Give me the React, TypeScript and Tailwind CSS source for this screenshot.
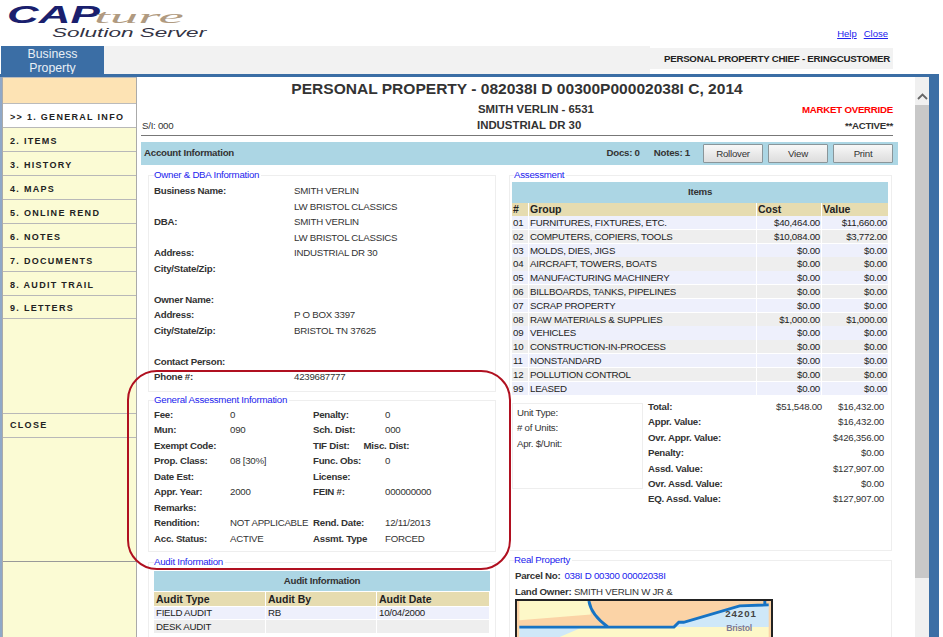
const navItems = [
  ">> 1. GENERAL INFO",
  "2. ITEMS",
  "3. HISTORY",
  "4. MAPS",
  "5. ONLINE REND",
  "6. NOTES",
  "7. DOCUMENTS",
  "8. AUDIT TRAIL",
  "9. LETTERS",
];

const ownerRows: [string, string][] = [
  ["Business Name:", "SMITH VERLIN"],
  ["", "LW BRISTOL CLASSICS"],
  ["DBA:", "SMITH VERLIN"],
  ["", "LW BRISTOL CLASSICS"],
  ["Address:", "INDUSTRIAL DR 30"],
  ["City/State/Zip:", ""],
  ["", ""],
  ["Owner Name:", ""],
  ["Address:", "P O BOX 3397"],
  ["City/State/Zip:", "BRISTOL TN 37625"],
  ["", ""],
  ["Contact Person:", ""],
  ["Phone #:", "4239687777"],
];

const generalRows: [string, string, string, string][] = [
  ["Fee:", "0", "Penalty:", "0"],
  ["Mun:", "090", "Sch. Dist:", "000"],
  ["Exempt Code:", "", "TIF Dist:", ""],
  ["Prop. Class:", "08 [30%]", "Func. Obs:", "0"],
  ["Date Est:", "", "License:", ""],
  ["Appr. Year:", "2000", "FEIN #:", "000000000"],
  ["Remarks:", "", "", ""],
  ["Rendition:", "NOT APPLICABLE", "Rend. Date:", "12/11/2013"],
  ["Acc. Status:", "ACTIVE", "Assmt. Type", "FORCED"],
];

const items: [string, string, string, string][] = [
  ["01", "FURNITURES, FIXTURES, ETC.", "$40,464.00", "$11,660.00"],
  ["02", "COMPUTERS, COPIERS, TOOLS", "$10,084.00", "$3,772.00"],
  ["03", "MOLDS, DIES, JIGS", "$0.00", "$0.00"],
  ["04", "AIRCRAFT, TOWERS, BOATS", "$0.00", "$0.00"],
  ["05", "MANUFACTURING MACHINERY", "$0.00", "$0.00"],
  ["06", "BILLBOARDS, TANKS, PIPELINES", "$0.00", "$0.00"],
  ["07", "SCRAP PROPERTY", "$0.00", "$0.00"],
  ["08", "RAW MATERIALS & SUPPLIES", "$1,000.00", "$1,000.00"],
  ["09", "VEHICLES", "$0.00", "$0.00"],
  ["10", "CONSTRUCTION-IN-PROCESS", "$0.00", "$0.00"],
  ["11", "NONSTANDARD", "$0.00", "$0.00"],
  ["12", "POLLUTION CONTROL", "$0.00", "$0.00"],
  ["99", "LEASED", "$0.00", "$0.00"],
];

const totals: [string, string, string][] = [
  ["Total:", "$51,548.00", "$16,432.00"],
  ["Appr. Value:", "", "$16,432.00"],
  ["Ovr. Appr. Value:", "", "$426,356.00"],
  ["Penalty:", "", "$0.00"],
  ["Assd. Value:", "", "$127,907.00"],
  ["Ovr. Assd. Value:", "", "$0.00"],
  ["EQ. Assd. Value:", "", "$127,907.00"],
];

function Panel({
  title,
  className,
  legendClass = "",
  children,
}: {
  title: string;
  className: string;
  legendClass?: string;
  children: React.ReactNode;
}) {
  return (
    <fieldset className={`border border-[#eeeeee] ${className}`}>
      <legend className={`pr-[2px] text-[9.7px] leading-[12px] text-[#2222ee] ${legendClass}`}>{title}</legend>
      {children}
    </fieldset>
  );
}

function Logo() {
  return (
    <div className="relative h-[46px] w-[215px] overflow-hidden">
      <span className="absolute top-[1px] left-[7px] origin-left [transform:scaleX(1.83)] text-[24px] leading-[28px] font-bold italic text-[#1a1f6e]">
        CAP
      </span>
      <span className="absolute top-[9px] left-[94px] origin-left [transform:scaleX(3)] font-['Liberation_Serif',serif] text-[19px] leading-[16px] italic text-[#b09a80]">
        ture
      </span>
      <span className="absolute top-[26px] left-[52px] origin-left [transform:scaleX(1.67)] text-[13.5px] leading-[14px] italic text-[#333344]">
        Solution Server
      </span>
    </div>
  );
}

function MapPicture() {
  return (
    <svg width="258" height="60" viewBox="0 0 258 60" className="block border-t-2 border-r-2 border-l-2 border-[#222222] bg-[#fbd3a6]">
      <path d="M0 0H72L74 14 0 20Z" fill="#fdf8c8" />
      <path d="M0 27H258V60H0Z" fill="#fdf8c8" />
      <path d="M0 27H66L40 38 0 42Z" fill="#cfe8f8" />
      <path d="M160 27L165 22H170L228 5 258 4V27Z" fill="#cfe8f8" />
      <path d="M72 0C74 12 82 20 92 27M0 27H160L165 22H170L228 5 258 4M254 0V4" fill="none" stroke="#1673c4" strokeWidth="3" />
      <text x="213" y="17" fontSize="10" fontWeight="700" letterSpacing="1" fill="#444444">24201</text>
      <text x="214" y="31" fontSize="9" fontWeight="700" fill="#7a7a99">Bristol</text>
    </svg>
  );
}

export default function App() {
  return (
    <div className="flex h-[637px] w-[943px] flex-col overflow-hidden bg-white font-['Liberation_Sans',Arial,sans-serif] text-[9.7px] tracking-[-0.25px] text-[#333333]">
      <div className="flex h-[46px] shrink-0 justify-between tracking-normal">
        <Logo />
        <div className="flex gap-[7px] pt-[28px] pr-[55px] text-[9.5px] leading-[12px] text-[#2222ee] underline">
          <span>Help</span>
          <span>Close</span>
        </div>
      </div>

      <div className="flex h-[28px] shrink-0 pl-[1px]">
        <div className="w-[103px] bg-[#3b6ea5] pt-[1px] text-center text-[12.3px] leading-[14px] tracking-normal text-[#e8eef5]">
          Business
          <br />
          Property
        </div>
        <div className="w-[546px] bg-[#f2f2f2]" />
        <div className="mt-[2px] mb-[5px] flex w-[243px] items-center justify-end bg-[#f2f2f2] pt-[1px] pr-[3px] font-bold whitespace-nowrap text-[#222222]">
          PERSONAL PROPERTY CHIEF - ERINGCUSTOMER
        </div>
      </div>

      <div className="h-[3px] w-[939px] shrink-0 bg-[#3b6ea5]" />

      <div className="relative flex min-h-0 flex-1">
        <div className="w-[2px] shrink-0 bg-[#8fa8c8]" />
        <aside className="w-[135px] shrink-0 border-x border-[#aaaaaa] bg-[#fbfbd4] text-[9px] font-bold tracking-[1.3px] whitespace-nowrap text-[#222222]">
          <div className="h-[27px] border-y border-[#bbbbbb] bg-[#fde3b4]" />
          {navItems.map((label, i) => (
            <div
              key={label}
              className={`flex items-center border-b-[1.5px] border-[#b8b8b8] pl-[7px] ${i === 8 ? "h-[23px] pt-[3px]" : "h-[24px] pt-[5px]"} ${i === 0 ? "bg-white" : ""}`}
            >
              {label}
            </div>
          ))}
          <div className="h-[95px] border-b border-[#b8b8b8]" />
          <div className="flex h-[24px] items-center border-b-[1.5px] border-[#b8b8b8] pt-[1px] pl-[7px]">CLOSE</div>
          <div className="h-[124px] border-b border-[#999999]" />
        </aside>

        <main className="w-[778px] shrink-0 overflow-hidden pl-[4px]">
          <div className="w-[752px] border-b border-[#777777]">
            <div className="h-[24px] pt-[3px] text-center text-[15.55px] leading-[18px] font-bold tracking-normal text-[#333333]">
              PERSONAL PROPERTY - 082038I D 00300P00002038I C, 2014
            </div>
            <div className="grid h-[34px] grid-cols-[336px_1fr_auto] leading-[17px]">
              <div className="pt-[16px] pl-[1px]">S/I: 000</div>
              <div className="text-[11.4px] font-bold tracking-normal">
                <div className="pl-[1px]">SMITH VERLIN - 6531</div>
                <div className="-mt-[1px]">INDUSTRIAL DR 30</div>
              </div>
              <div className="text-right font-bold">
                <div className="text-[#ff0000]">MARKET OVERRIDE</div>
                <div className="-mt-[1px]">**ACTIVE**</div>
              </div>
            </div>
          </div>

          <div className="mt-[6px] flex h-[23px] w-[757px] items-center bg-[#acd6e4] pl-[3px] font-bold">
            <span>Account Information</span>
            <span className="ml-auto">Docs: 0</span>
            <span className="ml-[14px]">Notes: 1</span>
            <div className="mr-[5px] ml-[13px] flex gap-[5px] font-normal">
              {["Rollover", "View", "Print"].map((b) => (
                <button
                  key={b}
                  className="h-[19px] w-[60px] rounded-[1px] border border-[#8a9599] bg-gradient-to-b from-[#f8f8f8] to-[#dddddd] text-[9.7px] leading-[14px] text-[#333333]"
                >
                  {b}
                </button>
              ))}
            </div>
          </div>

          <div className="mt-[4px] flex gap-[13px] pl-[7px]">
            <div className="flex w-[348px] shrink-0 flex-col gap-[2px]">
              <Panel title="Owner & DBA Information" className="h-[223px] px-[5px] pt-[2px]">
                {ownerRows.map(([label, value], i) => (
                  <div key={i} className="grid h-[15.5px] grid-cols-[140px_1fr] leading-[15.5px]">
                    <span className="font-bold">{label}</span>
                    <span>{value}</span>
                  </div>
                ))}
              </Panel>
              <Panel title="General Assessment Information" className="h-[158px] px-[5px] pt-[1px]">
                {generalRows.map(([a, b, c, d], i) => (
                  <div key={i} className="grid h-[15.45px] grid-cols-[76px_83px_72px_1fr] leading-[15.45px]">
                    <span className="font-bold">{a}</span>
                    <span className="whitespace-nowrap">{b}</span>
                    <span className="font-bold whitespace-nowrap">
                      {c}
                      {c === "TIF Dist:" && <span className="ml-[14px]">Misc. Dist:</span>}
                    </span>
                    <span>{d}</span>
                  </div>
                ))}
              </Panel>
              <Panel title="Audit Information" className="mt-[2px] h-[90px] px-[5px] pt-[3px]">
                <div className="flex h-[20px] w-[336px] items-center justify-center bg-[#acd6e4] font-bold">
                  Audit Information
                </div>
                <div className="grid w-[336px] grid-cols-[112px_111px_113px]">
                  {["Audit Type", "Audit By", "Audit Date"].map((h) => (
                    <div key={h} className="mt-[1px] mr-[1px] h-[14px] bg-[#e6dcb0] pl-[2px] text-[10.5px] leading-[14px] font-bold tracking-normal text-[#222222]">
                      {h}
                    </div>
                  ))}
                  {["FIELD AUDIT", "RB", "10/04/2000"].map((c) => (
                    <div key={c} className="mt-[1px] mr-[1px] h-[12px] bg-[#eef0fc] pl-[2px] leading-[12px] text-[#222222]">
                      {c}
                    </div>
                  ))}
                  {["DESK AUDIT", "", " "].map((c, i) => (
                    <div key={i} className="mt-[1px] mr-[1px] h-[13px] bg-[#eeeeee] pl-[2px] leading-[13px] text-[#222222]">
                      {c}
                    </div>
                  ))}
                </div>
              </Panel>
            </div>

            <div className="flex w-[383px] shrink-0 flex-col gap-[2px]">
              <Panel title="Assessment" legendClass="ml-[2px]" className="h-[382px] pt-[1px] pl-[2px]">
                <div className="flex h-[21px] w-[376px] items-center justify-center bg-[#acd6e4] font-bold">Items</div>
                <div className="w-[376px]">
                  <div className="grid h-[12.5px] grid-cols-[17px_228px_65px_66px] text-[10.5px] leading-[13px] font-bold tracking-normal text-[#222222]">
                    <div className="mr-[1px] bg-[#e6dcb0] pl-[1px]">#</div>
                    <div className="mr-[1px] bg-[#e6dcb0] pl-[1px]">Group</div>
                    <div className="mr-[1px] bg-[#e6dcb0] pl-[1px]">Cost</div>
                    <div className="bg-[#e6dcb0] pl-[1px]">Value</div>
                  </div>
                  {items.map(([n, g, c, v], i) => {
                    const bg = i % 2 === 0 ? "bg-[#eef0fc]" : "bg-[#eeeeee]";
                    return (
                      <div key={n} className="mt-[0.5px] grid h-[13.3px] grid-cols-[17px_228px_65px_66px] leading-[13px] text-[#222222]">
                        <div className={`mr-[1px] pl-[1px] ${bg}`}>{n}</div>
                        <div className={`mr-[1px] pl-[1px] ${bg}`}>{g}</div>
                        <div className={`mr-[1px] pr-[1px] text-right ${bg}`}>{c}</div>
                        <div className={`pr-[1px] text-right ${bg}`}>{v}</div>
                      </div>
                    );
                  })}
                </div>
                <div className="mt-[8px] flex">
                  <div className="h-[86px] w-[131px] border border-[#eeeeee] pt-[1px] pl-[4px] leading-[15.5px]">
                    <div>Unit Type:</div>
                    <div># of Units:</div>
                    <div>Apr. $/Unit:</div>
                  </div>
                  <div className="-mt-[4px] ml-[5px] w-[236px]">
                    {totals.map(([label, cost, value]) => (
                      <div key={label} className="grid h-[15.45px] grid-cols-[1fr_56px_62px] leading-[15.45px]">
                        <span className="font-bold">{label}</span>
                        <span className="text-right">{cost}</span>
                        <span className="text-right">{value}</span>
                      </div>
                    ))}
                  </div>
                </div>
              </Panel>
              <Panel title="Real Property" legendClass="-ml-[1px]" className="mt-[1px] h-[100px] pt-[2px] pl-[5px]">
                <div className="leading-[15.5px]">
                  <div>
                    <span className="font-bold">Parcel No:</span>
                    <span className="ml-[4px] text-[#2222ee]">038I D 00300 00002038I</span>
                  </div>
                  <div>
                    <span className="font-bold">Land Owner:</span> SMITH VERLIN W JR &amp;
                  </div>
                </div>
                <MapPicture />
              </Panel>
            </div>
          </div>
        </main>

        <div className="flex w-[14px] shrink-0 flex-col bg-[#f0f0f0]">
          <div className="flex h-[28px] items-center justify-center pt-[10px]">
            <svg width="11" height="7" viewBox="0 0 11 7">
              <path d="M1 6L5.5 1.5 10 6" fill="none" stroke="#666666" strokeWidth="1.8" />
            </svg>
          </div>
          <div className="h-[473px] bg-[#c8c8c8]" />
        </div>
        <div className="w-[10px] shrink-0 bg-[#3b6ea5]" />

        {/* hand drawn highlight over the screenshot */}
        <div className="absolute top-[293px] left-[127px] h-[200px] w-[384px] rounded-[30px] border-2 border-[#b01020]" />
      </div>
    </div>
  );
}
